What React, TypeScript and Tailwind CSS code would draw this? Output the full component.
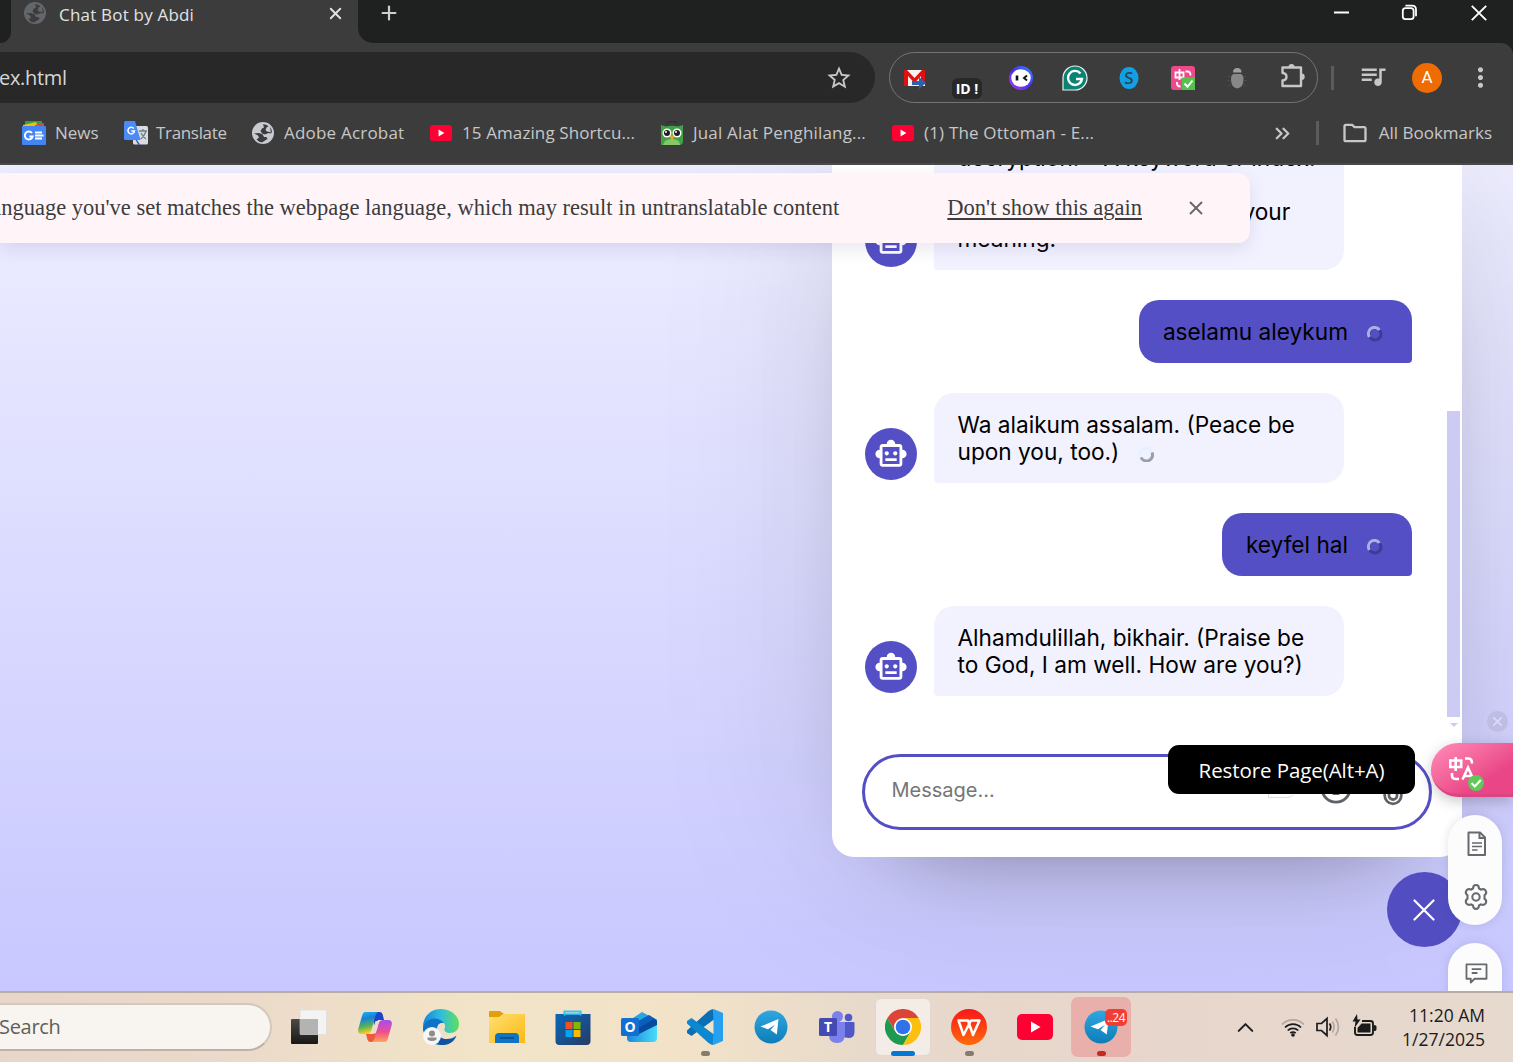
import React from "react";
import { MdStarBorder, MdQueueMusic, MdMoreVert, MdOutlineFolder, MdOutlineSmartToy } from "react-icons/md";
import { ChevronsRight, ChevronUp, Plus, Smile, X } from "lucide-react";

function YouTube({ className }: { className: string }) {
  return (
    <svg viewBox="0 0 36 26" className={className}>
      <rect width="36" height="26" rx="5" fill="#ff0033" />
      <path d="M14 7.5v11l9.5-5.5z" fill="#fff" />
    </svg>
  );
}

function Globe({ className }: { className: string }) {
  return (
    <svg viewBox="0 0 22 22" className={className}>
      <circle cx="11" cy="11" r="11" fill="currentColor" />
      <path d="M11 2.200q3.500 0 5.500 2l-2 1.300-1 2.500 1.500 1.500q3 0 4.800 1.500.3-1.500-.3-3.500l-1.500-2.500 1 6.500-2.500-.5-3.500 1.500-3-1-1.500-2.500 1.500-2.500 2-1z" fill="#3c3c3c" />
      <path d="M2 11.500l5-.5 3.500 1.200 1.500 2.800h2.500l1 2-2.500 1.500-2.500 1.700q-4 0-6-2.700l2.500-2-1-2z" fill="#3c3c3c" />
    </svg>
  );
}

/* ---------- Browser chrome ---------- */

function TabStrip() {
  return (
    <div className="flex h-[43px] bg-[#3c3c3c]">
      <div className="w-[11px] rounded-br-[13px] bg-[#1f2120]" />
      <div className="flex h-7 w-[347px] items-center pl-[13px]">
        <Globe className="-mt-[2px] size-[22px] text-[#63676b]" />
        <span className="ml-[13px] w-[267px] pt-px text-[17px] tracking-[0.2px] whitespace-nowrap text-[#e3e3e3]">Chat Bot by Abdi</span>
        <X className="-mt-[2px] size-[19px] text-[#e3e3e3]" strokeWidth={2.4} />
      </div>
      <div className="flex flex-1 items-start rounded-bl-[15px] bg-[#1f2120]">
        <Plus className="mt-[2px] ml-[20px] size-[22px] text-[#cfcfcf]" strokeWidth={2.4} />
        <div className="ml-auto flex items-center">
          <svg viewBox="0 0 16 26" className="mr-[51px] h-[26px] w-4">
            <path d="M0 12.500h15" stroke="#fff" strokeWidth="2" />
          </svg>
          <svg viewBox="0 0 17 17" className="mr-[53px] -mt-px size-[17px]" fill="none" stroke="#fff" strokeWidth="1.8">
            <rect x="1.8" y="4.2" width="10.8" height="11" rx="2.6" />
            <path d="M4.4 1.6H11q4 0 4 4v6.6" />
          </svg>
          <svg viewBox="0 0 16 16" className="mr-[26px] -mt-px size-4" stroke="#fff" strokeWidth="1.9">
            <path d="M.8.8l14.4 14.4M15.2.8L.8 15.2" />
          </svg>
        </div>
      </div>
    </div>
  );
}

function Extensions() {
  return (
    <div className="ml-[14px] flex h-[51px] w-[429px] items-center rounded-full border-[1.5px] border-[#757575]">
      <div className="flex w-[50px] shrink-0 justify-center">
        <svg viewBox="0 0 24 22" className="h-[22px] w-6">
          <rect x="1" y="3" width="21" height="16" fill="#f4f1ef" />
          <path d="M1 19V3l3 0 7.5 8L19 3h3v12h-4V9l-6.500 7L5 9v10z" fill="#dd1111" />
          <path d="M9 14h7v-4l7 6-7 6v-4H9z" fill="#2f5fb0" />
        </svg>
      </div>
      <div className="flex w-[54px] shrink-0 justify-center">
        <div className="mt-[22px] flex h-[21px] w-[30px] items-center justify-center rounded-[6px] bg-[#282828] text-[14px] font-bold whitespace-nowrap text-white">ID !</div>
      </div>
      <div className="flex w-[54px] shrink-0 justify-center">
        <svg viewBox="0 0 24 24" className="size-6">
          <defs>
            <linearGradient id="face" x1="0" y1="1" x2="1" y2="0">
              <stop offset="0" stopColor="#b43cf0" />
              <stop offset=".5" stopColor="#4a2df5" />
              <stop offset="1" stopColor="#2f8dff" />
            </linearGradient>
          </defs>
          <circle cx="12" cy="12" r="12" fill="url(#face)" />
          <ellipse cx="12" cy="12" rx="9.800" ry="8.800" fill="#fff" />
          <path d="M8 9.500v5" stroke="#111" strokeWidth="2.6" />
          <path d="M18 9.500l-3 2.500 3 2.500" stroke="#111" strokeWidth="1.9" fill="none" />
        </svg>
      </div>
      <div className="flex w-[54px] shrink-0 justify-center">
        <svg viewBox="0 0 26 26" className="size-[26px]">
          <path d="M1 25V13A12 12 0 1 1 13 25z" fill="#0b8372" stroke="#e8f3f1" strokeWidth="1.2" />
          <path d="M18.500 8.500A7 7 0 1 0 20 14h-6" stroke="#fff" strokeWidth="2.300" fill="none" />
        </svg>
      </div>
      <div className="flex w-[54px] shrink-0 justify-center">
        <svg viewBox="0 0 20 22" className="h-[22px] w-5">
          <ellipse cx="10" cy="11" rx="9.500" ry="11" fill="#12a0e4" />
          <text x="10" y="17" textAnchor="middle" fontSize="17" fontWeight="600" fill="#31414b">S</text>
        </svg>
      </div>
      <div className="flex w-[54px] shrink-0 justify-center">
        <svg viewBox="0 0 24 24" className="size-6">
          <rect width="24" height="24" rx="3" fill="#ee4a8b" />
          <path d="M4.500 6.500h8v5h-8zM8.500 3v11M14.500 5.500h2q3 0 3 4M6 16v1.500q0 3 3.500 3" stroke="#fff" strokeWidth="1.800" fill="none" />
          <rect x="11" y="11.500" width="13" height="12.500" fill="#54c14a" />
          <path d="M13.500 17.500l3 3.200 5-6" stroke="#fff" strokeWidth="1.900" fill="none" />
        </svg>
      </div>
      <div className="flex w-[54px] shrink-0 justify-center">
        <svg viewBox="0 0 20 22" className="h-[22px] w-5">
          <path d="M6 5.500q0-4.500 4.250-4.500t4.250 4.500z" fill="#a0a0a0" />
          <path d="M6.500 7h7.500q2.500 1 2.500 5 0 8.500-6.250 9.500Q4 20.500 4 12q0-4 2.500-5z" fill="#888" />
          <path d="M3.500 9.500H1M3.500 13.500H0M4 17.500l-3 1.500M17 9.500h2M17 13.500h3M16.500 17.500l3 1.500" stroke="#4c4c4c" />
        </svg>
      </div>
      <div className="flex w-[54px] shrink-0 justify-center">
        <svg viewBox="0 0 26 26" className="ml-[4px] -mt-[3px] size-[26px]">
          <path d="M2.500 4.500H21v18.500H2.500v-5.500q4-.5 4-3.750t-4-3.750z" fill="none" stroke="#c7c7c7" strokeWidth="2.400" strokeLinejoin="round" />
          <path d="M8.500 4a3 3 0 0 1 6 0zM21.500 10.500a3.200 3.200 0 0 1 0 6.400z" fill="#c7c7c7" />
        </svg>
      </div>
    </div>
  );
}

function Toolbar() {
  return (
    <div className="bg-[#1f2120]">
      <div className="flex h-[69px] items-center rounded-tr-[12px] bg-[#3c3c3c]">
        <div className="flex h-[51px] w-[875px] items-center justify-between rounded-r-full bg-[#282828] pr-[22px]">
          <span className="-ml-px text-[20px] tracking-[-0.300px] text-[#d6d6d6]">ex.html</span>
          <MdStarBorder className="size-7 text-[#c7c7c7]" />
        </div>
        <Extensions />
        <div className="ml-[13px] h-6 w-[3px] bg-[#5c5c5c]" />
        <MdQueueMusic className="-mt-[3px] ml-[24px] size-[30px] text-[#c7c7c7]" />
        <div className="ml-[24px] flex size-[30px] items-center justify-center rounded-full bg-[#ee6c02] font-[Roboto] text-[17px] text-white">A</div>
        <MdMoreVert className="ml-[23px] size-[31px] text-[#c7c7c7]" />
      </div>
    </div>
  );
}

function Bookmark({ icon, label, className }: { icon: React.ReactNode; label: string; className: string }) {
  return (
    <div className={"flex shrink-0 items-center " + className}>
      {icon}
      <span className="whitespace-nowrap">{label}</span>
    </div>
  );
}

function NewsIcon() {
  return (
    <svg viewBox="0 0 24 24" className="size-6">
      <path d="M3 0h17v8H3z" fill="#23a455" />
      <path d="M1 4l13-3 3 7H1z" fill="#fbbc04" />
      <path d="M13 4l9-2v6h-9z" fill="#ea4335" />
      <rect y="5" width="24" height="19" rx="1" fill="#4285f4" />
      <path d="M10 12a4 4 0 1 0 .7 3.500H7.300" stroke="#fff" strokeWidth="1.900" fill="none" />
      <path d="M13 11.500h7M13 14.500h8.500M13 17.500h7" stroke="#fff" strokeWidth="1.800" />
    </svg>
  );
}

function GoogleTranslateIcon() {
  return (
    <svg viewBox="0 0 24 24" className="size-6">
      <rect x="9" y="5" width="15" height="18.500" rx="1.500" fill="#dadce0" />
      <path d="M15 10h8M19 8v2M22 10q-2 6-5.500 8M17 12q2 4 5 6" stroke="#6b7f8c" strokeWidth="1.300" fill="none" />
      <path d="M13 19l3 4.500-1.500.5-3-5z" fill="#3157c0" />
      <path d="M1.500 0H11l5.500 19h-15Q0 19 0 17.500v-16Q0 0 1.500 0z" fill="#4c8bf5" />
      <path d="M9.800 7.500a3.300 3.300 0 1 0 .7 2.500H7.300" stroke="#fff" strokeWidth="1.500" fill="none" />
    </svg>
  );
}

function OwlIcon() {
  return (
    <svg viewBox="0 0 22 24" className="h-6 w-[22px]">
      <path d="M6 2q5-3 10 0" stroke="#2b2b2b" strokeWidth="1.200" fill="none" />
      <path d="M0 4l5 1.500q6-1.500 12 0L22 4v16q0 4-4 4H0z" fill="#43a047" />
      <path d="M2 24q1-6 9-6t8 6z" fill="#82c96a" />
      <circle cx="6" cy="12" r="4.500" fill="#fff" />
      <circle cx="16" cy="12" r="4.500" fill="#fff" />
      <circle cx="6" cy="12" r="3" fill="#1d1d1d" />
      <circle cx="16" cy="12" r="3" fill="#1d1d1d" />
      <circle cx="5" cy="11" r="1" fill="#fff" />
      <circle cx="15" cy="11" r="1" fill="#fff" />
      <path d="M8.500 15.500L11 14l2.500 1.500L11 19.500z" fill="#f5a623" />
    </svg>
  );
}

function BookmarksBar() {
  return (
    <div className="flex h-[53px] items-center border-b-2 border-[#4a4848] bg-[#3c3c3c] pb-[9px] pl-[22px] text-[17px] text-[#c7c7c7]">
      <Bookmark className="w-[102px] gap-[9px]" icon={<NewsIcon />} label="News" />
      <Bookmark className="w-[128px] gap-[8px] tracking-[-0.330px]" icon={<GoogleTranslateIcon />} label="Translate" />
      <Bookmark className="w-[177px] gap-[10px] tracking-[0.200px]" icon={<Globe className="size-[22px] text-[#c7cacf]" />} label="Adobe Acrobat" />
      <Bookmark className="w-[232px] gap-[9px] tracking-[0.100px]" icon={<YouTube className="h-4 w-6" />} label="15 Amazing Shortcu..." />
      <Bookmark className="w-[230px] gap-[10px] tracking-[0.170px]" icon={<OwlIcon />} label="Jual Alat Penghilang..." />
      <Bookmark className="gap-[9px] tracking-[0.180px]" icon={<YouTube className="h-4 w-6" />} label="(1) The Ottoman - E..." />
      <ChevronsRight className="ml-auto size-[23px]" strokeWidth={2.400} />
      <div className="ml-[22px] h-6 w-[3px] bg-[#5c5c5c]" />
      <Bookmark className="mr-[21px] ml-[22px] gap-[10px]" icon={<MdOutlineFolder className="size-[28px]" />} label="All Bookmarks" />
    </div>
  );
}

/* ---------- Chat page ---------- */

function Spinner({ dark }: { dark?: boolean }) {
  return dark ? (
    <svg viewBox="0 0 16 16" className="mr-[5px] ml-[19px] inline size-4 align-[-2px]" fill="none" strokeWidth="3">
      <circle cx="8" cy="8" r="6" stroke="#3e3a96" />
      <path d="M2.500 11A6 6 0 0 1 12.500 4" stroke="#a9b0e6" />
    </svg>
  ) : (
    <svg viewBox="0 0 16 16" className="ml-[12px] inline size-4 align-[-2px]" fill="none" strokeWidth="3">
      <circle cx="8" cy="8" r="6" stroke="#e6f1fe" />
      <path d="M14 6.500A6 6 0 0 1 3 11.500" stroke="#9d9da8" />
    </svg>
  );
}

function BotMessage({ children }: { children: React.ReactNode }) {
  return (
    <div className="flex shrink-0 items-end">
      <div className="mb-[3px] flex size-[52px] shrink-0 items-center justify-center rounded-full bg-[#544fc4]">
        <MdOutlineSmartToy className="size-[34px] text-white" />
      </div>
      <div className="ml-[17px] w-[410px] rounded-[20px] rounded-bl-[4px] bg-[#f2f2ff] py-[18px] pr-6 pl-[23.500px] whitespace-nowrap">{children}</div>
    </div>
  );
}

function UserMessage({ children }: { children: React.ReactNode }) {
  return (
    <div className="shrink-0 self-end rounded-[20px] rounded-br-[4px] bg-[#544fc4] py-[18px] pr-6 pl-6 whitespace-nowrap">
      {children}
      <Spinner dark />
    </div>
  );
}

function ChatPopup() {
  return (
    <div className="absolute top-0 left-[832px] h-[692px] w-[630px] rounded-b-[22px] bg-white font-[Inter] shadow-[0_0_192px_rgba(0,0,0,0.1),0_48px_96px_-72px_rgba(0,0,0,0.5)]">
      <div className="flex h-[567px]">
        <div className="flex h-[531px] flex-1 flex-col justify-end gap-[30px] overflow-hidden pl-[33px] text-[22.650px] leading-[27px] text-black">
          <BotMessage>
            decryption. * A keyword or index.
            <br />
            <br />
            <span className="block pl-[285px]">your</span>
            meaning.
          </BotMessage>
          <UserMessage>aselamu aleykum</UserMessage>
          <BotMessage>
            Wa alaikum assalam. (Peace be
            <br />
            upon you, too.) <Spinner />
          </BotMessage>
          <UserMessage>keyfel hal</UserMessage>
          <BotMessage>
            Alhamdulillah, bikhair. (Praise be
            <br />
            to God, I am well. How are you?)
          </BotMessage>
        </div>
        <div className="mr-[2px] ml-[35px] flex w-[13px] flex-col items-center">
          <div className="mt-[246px] h-[306px] w-full bg-[#cccbf4]" />
          <div className="mt-[6px] h-0 w-0 border-x-4 border-t-4 border-x-transparent border-t-[#cccbf4]" />
        </div>
      </div>
      <div className="mx-[30px] mt-[22px] flex h-[76px] w-[570px] items-center rounded-full border-[3px] border-[#544fc4] pb-[4px] pl-[26.500px]">
        <span className="flex-1 text-[20px] text-[#757575]">Message...</span>
        <div className="mt-[2px] mr-[24px] h-[14px] w-[27px] rounded-br-[8px] border-b border-l border-[#dcdcea]" />
        <Smile className="mr-[30px] -mt-[4px] size-[34px] shrink-0" color="#5f6368" strokeWidth={2} />
        <svg viewBox="0 0 20 36" className="-mt-[2px] mr-[26px] h-9 w-5 shrink-0" fill="none" stroke="#5f6368" strokeWidth="2.800">
          <path d="M18.300 6v18.500a8.300 8.300 0 0 1-16.600 0V6M14 6v18.500a4 4 0 0 1-8 0V6" />
        </svg>
      </div>
    </div>
  );
}

function LanguageBanner() {
  return (
    <div className="absolute top-2 left-0 flex h-[70px] w-[1250px] items-center justify-end overflow-hidden rounded-r-[12px] bg-[#fff5f9] pr-[43px] font-['Liberation_Serif'] text-[22.500px] whitespace-nowrap text-[#3c3c3c] shadow-[0_6px_18px_rgba(60,60,120,0.12)]">
      <span className="mr-[108px]">language you've set matches the webpage language, which may result in untranslatable content</span>
      <span className="underline decoration-[1.500px] underline-offset-[3px]">Don't show this again</span>
      <X className="ml-[43px] size-[22px] shrink-0 text-[#666]" strokeWidth={2} />
    </div>
  );
}

function TranslateWidget() {
  return (
    <>
      <svg viewBox="0 0 20 20" className="absolute top-[546px] left-[1487px] size-[21px]">
        <circle cx="10" cy="10" r="10" fill="#bfbee2" />
        <path d="M6 6l8 8M14 6l-8 8" stroke="#d9d8f8" strokeWidth="1.800" />
      </svg>
      <div className="absolute top-[578px] left-[1431px] h-[54px] w-[82px] rounded-l-full border-b-[3px] border-[#dc4381] bg-gradient-to-br from-[#ff8cb9] to-[#ea4687] to-70% pt-[13px] pl-[18px] shadow-[0_4px_14px_rgba(0,0,0,0.22)]">
        <svg viewBox="0 0 36 36" className="size-9" fill="none" stroke="#fff" strokeWidth="2.600">
          <path d="M1.200 4.500h11v6.500h-11zM6.700 1v14M16 2.500h3.500q3.500 0 3.500 5M3 17v2.500q0 3.500 4 3.500h3" />
          <path d="M13.500 23.500l5.500-12 5.500 12M15.500 20h7" />
          <circle cx="27" cy="27" r="8" fill="#5fc858" stroke="none" />
          <path d="M22.500 27l3.300 3.500 6-6.500" strokeWidth="2.200" />
        </svg>
      </div>
      <div className="absolute top-[580px] left-[1168px] flex h-[49px] w-[247px] items-center justify-center rounded-[11px] bg-black pt-[2px] text-[20.500px] tracking-[-0.080px] whitespace-nowrap text-white">Restore Page(Alt+A)</div>
      <div className="absolute top-[650px] left-[1448px] flex h-[110px] w-[54px] flex-col items-center rounded-full bg-[#fcfcfc] pt-4 shadow-[0_0_10px_rgba(60,60,120,0.15)]">
        <svg viewBox="0 0 20 26" className="ml-[3px] h-[26px] w-5" fill="none" stroke="#66696d" strokeWidth="2">
          <path d="M1.500 1.500h11.500l5 5v17.500H1.500z" strokeLinejoin="round" />
          <path d="M12.500 1.500V7H18" />
          <path d="M5 12h10M5 15.500h10M5 19h5.500" strokeWidth="1.600" />
        </svg>
        <svg viewBox="0 0 24 24" className="mt-[27px] ml-px size-[26px]" fill="none" stroke="#66696d" strokeWidth="1.900" strokeLinejoin="round">
          <path d="M9.300 4.200Q9.300 1 12 1t2.700 3.200q1 .4 1.800 1Q19.600 3.900 21 6.200q1.300 2.400-1.200 4.300.2 1.500 0 3 2.500 1.900 1.200 4.300-1.400 2.300-4.500 1-.8.600-1.800 1Q14.700 23 12 23t-2.700-3.200q-1-.4-1.800-1-3.100 1.300-4.500-1-1.300-2.400 1.200-4.300-.2-1.500 0-3Q1.700 8.600 3 6.200q1.400-2.300 4.500-1 .8-.6 1.800-1z" />
          <circle cx="12" cy="12" r="3.400" />
        </svg>
      </div>
      <div className="absolute top-[778px] left-[1448px] flex h-[80px] w-[54px] justify-center rounded-full bg-[#fcfcfc] pt-5 shadow-[0_0_10px_rgba(60,60,120,0.15)]">
        <svg viewBox="0 0 24 22" className="ml-[3px] h-[21px] w-[23px]" fill="none" stroke="#66696d" strokeWidth="1.900">
          <path d="M1.500 1.500h21v15H10L6 20.500v-4H1.500z" strokeLinejoin="round" />
          <path d="M7 6.500h10M7 10.500h6" />
        </svg>
      </div>
    </>
  );
}

function ChatPage() {
  return (
    <div className="relative h-[826px] overflow-hidden bg-gradient-to-b from-[#eeeeff] to-[#c8c7ff]">
      <ChatPopup />
      <div className="absolute top-[707px] left-[1387px] flex size-[75px] items-center justify-center rounded-full bg-[#524dc0] pr-[2px]">
        <svg viewBox="0 0 22 22" className="size-[22px]" stroke="#fff" strokeWidth="2.200" strokeLinecap="round">
          <path d="M1.500 1.500l19 19M20.500 1.500l-19 19" />
        </svg>
      </div>
      <LanguageBanner />
      <TranslateWidget />
    </div>
  );
}

/* ---------- Taskbar ---------- */

function Gradients() {
  return (
    <svg className="absolute size-0">
      <defs>
        <linearGradient id="tvDark" x2="0" y2="1"><stop stopColor="#4a4a46" /><stop offset="1" stopColor="#181818" /></linearGradient>
        <linearGradient id="cpA" x2=".2" y2="1"><stop stopColor="#23b6f3" /><stop offset=".35" stopColor="#1681d8" /><stop offset=".7" stopColor="#58b25a" /><stop offset="1" stopColor="#f7cd1f" /></linearGradient>
        <linearGradient id="cpB" x2="0" y2="1"><stop stopColor="#a64df2" /><stop offset=".55" stopColor="#ee4f8e" /><stop offset="1" stopColor="#ffa557" /></linearGradient>
        <linearGradient id="edA" x1="0" x2="1"><stop stopColor="#1585d8" /><stop offset=".5" stopColor="#31bedd" /><stop offset="1" stopColor="#5ee05a" /></linearGradient>
        <linearGradient id="fold" x2="1" y2="1"><stop stopColor="#ffdf72" /><stop offset="1" stopColor="#fbb913" /></linearGradient>
        <linearGradient id="store" x2="1" y2="1"><stop stopColor="#0669ba" /><stop offset="1" stopColor="#293a66" /></linearGradient>
        <linearGradient id="tg" x2="0" y2="1"><stop stopColor="#2fa7e0" /><stop offset="1" stopColor="#0d7db8" /></linearGradient>
        <linearGradient id="wps" x2="0" y2="1"><stop stopColor="#f8171b" /><stop offset="1" stopColor="#ff6a08" /></linearGradient>
        <linearGradient id="olk" x2="1"><stop stopColor="#1b86dc" /><stop offset="1" stopColor="#48dcfa" /></linearGradient>
      </defs>
    </svg>
  );
}

function TelegramIcon() {
  return (
    <svg viewBox="0 0 36 36" className="size-9">
      <circle cx="18" cy="18" r="16.500" fill="url(#tg)" />
      <path d="M7.500 17.500L25.500 10l-1.700 15.500-6.300-4.500 1.200-1.300 3.300-4-7 4.500z" fill="#fff" />
    </svg>
  );
}

const appIcons: React.ReactNode[] = [
  <svg viewBox="0 0 36 36" className="size-9">
    <rect x="0" y="10" width="27" height="25" rx="1" fill="url(#tvDark)" />
    <rect x="9" y="1" width="26.500" height="24.500" rx="1" fill="#f3f3f3" stroke="#dcdcdc" strokeWidth=".6" />
    <path d="M9 10h18v15.500H9z" fill="#b3b3b1" />
  </svg>,
  <svg viewBox="0 0 36 36" className="size-9">
    <path d="M16 3h7q2 0 2.700 2.500L27 11h-6l-4 6z" fill="#1b44c6" />
    <path d="M20 33h-6q-3 0-3.600-2.500L9 25h7l6-6z" fill="#ee5a3a" />
    <path d="M8 3h13q-2 1-3 5l-3.500 13q-1.200 4-4.500 4H5q-5 0-3.600-5.500L5 7q1-4 3-4z" fill="url(#cpA)" />
    <path d="M28 33H15q2-1 3-5l3.500-13q1.200-4 4.500-4h5q5 0 3.600 5.500L31 29q-1 4-3 4z" fill="url(#cpB)" />
    <path d="M18.500 12h3.500l-3.300 12.500h-4z" fill="#f0dccb" />
  </svg>,
  <svg viewBox="0 0 36 36" className="size-9">
    <path d="M0 18C0 7 8 0 18 0s18 7 18 15c0 6-4 9-9 9-4 0-6-2-6-3.500 0-1.200 1-1.500 1-3.500 0-2.500-2-4.500-6-4.500Q7 12 4 22L0 22z" fill="url(#edA)" />
    <path d="M0 20C1 11 9 8 15 10q4 1.500 6 4-7-1-7 6 0 6 5.500 9.500 4 2.500 8.500 2Q22 36 16 36 2 34 0 20z" fill="#0c73c8" />
    <path d="M14 22q1 7 8 8 7 .5 11.500-3.500-2 6-8 8.500-5 1.500-9 1-4-6-2.500-14z" fill="#1153a0" />
    <path d="M17 14.500a3.800 3.800 0 0 1 5 3.500q-.5 2-.8 3 1 4 6 5.300-6 1.500-10.200-2-2.500-3-2-7z" fill="#eedfc8" />
    <circle cx="9" cy="27" r="9" fill="#f7f7f7" />
    <circle cx="9" cy="24.500" r="3" fill="#8c8c8c" />
    <path d="M4.500 28.500h9v2q-4.500 3-9 0z" fill="#8c8c8c" />
  </svg>,
  <svg viewBox="0 0 36 36" className="size-9">
    <path d="M0 3q0-1 1-1h10l4 3v5H0z" fill="#dfa009" />
    <path d="M0 8h10l4-3h21q1 0 1 1v28H0z" fill="url(#fold)" />
    <path d="M6 34v-6q0-4 4-4h16q4 0 4 4v6z" fill="#0f74c4" />
    <path d="M11 29h14" stroke="#0a4c8a" strokeWidth="1.600" />
  </svg>,
  <svg viewBox="0 0 36 36" className="size-9">
    <path d="M9.500 7V2.500h16V7" stroke="#36c6f6" strokeWidth="2.200" fill="none" />
    <path d="M.500 5h35v27q0 4-4 4h-27q-4 0-4-4z" fill="url(#store)" />
    <path d="M9.500 6.500v-1.500h16v1.500" stroke="#36c6f6" strokeWidth="1.500" fill="none" />
    <path d="M10.500 13h7v7h-7z" fill="#f25022" /><path d="M18.500 13h7v7h-7z" fill="#7fba00" />
    <path d="M10.500 21h7v7h-7z" fill="#00a4ef" /><path d="M18.500 21h7v7h-7z" fill="#ffb900" />
  </svg>,
  <svg viewBox="0 0 36 36" className="size-9">
    <path d="M6 13l15-10 15 8v16H6z" fill="#28a6e3" />
    <path d="M12 15l16-9 8 5-18 13z" fill="#0a5fbc" />
    <path d="M36 12v17q0 4-4 4H10q-4 0-4-4v-3z" fill="url(#olk)" />
    <path d="M16 20l17-10 3 2v4l-18 9z" fill="#064a9f" />
    <rect y="9" width="18" height="18" rx="1.500" fill="#1270d2" />
    <text x="9" y="23" textAnchor="middle" fontSize="14" fontWeight="700" fill="#fff">O</text>
  </svg>,
  <svg viewBox="0 0 36 36" className="size-9">
    <path d="M26.500 0L27 10.500 4.500 27 0 24v-2.500L21 2.500q3-2.500 5.500-2.500z" fill="#0b6fb5" />
    <path d="M26.500 36L27 25.500 4.500 9 0 12v2.500L21 33.500q3 2.500 5.500 2.500z" fill="#0c87d0" />
    <path d="M26.500 0L36 4v28l-9.500 4z" fill="#27a0f0" />
  </svg>,
  <TelegramIcon />,
  <svg viewBox="0 0 36 36" className="size-9">
    <circle cx="18.500" cy="7.500" r="5.500" fill="#7b80ea" />
    <circle cx="29.500" cy="8.500" r="3.800" fill="#5057c6" />
    <path d="M24 13h10.500q1 0 1 1v9q0 6-6 6-4 0-5.500-2z" fill="#5057c6" />
    <path d="M10 13h15q1 0 1 1v11q0 9-8 9t-8-8z" fill="#7b80ea" />
    <rect y="9" width="18" height="18" rx="1.500" fill="#4549b4" />
    <text x="9" y="23" textAnchor="middle" fontSize="14" fontWeight="700" fill="#fff">T</text>
  </svg>,
  <svg viewBox="0 0 36 36" className="size-9">
    <path d="M2.400 9A18 18 0 0 1 33.600 9H18v9l-7.800 4.500z" fill="#dc4437" />
    <path d="M2.400 9l7.800 13.500L18 18l7.800 4.500L18 36A18 18 0 0 1 2.400 9z" fill="#1e9a50" />
    <path d="M33.600 9A18 18 0 0 1 18 36l7.800-13.500L18 18V9z" fill="#fdbf0d" />
    <circle cx="18" cy="18" r="9" fill="#fff" /><circle cx="18" cy="18" r="7.300" fill="#2f72ea" />
  </svg>,
  <svg viewBox="0 0 36 36" className="size-9">
    <circle cx="18" cy="18" r="18" fill="url(#wps)" />
    <path d="M7.500 11.500H17L22 26l6.500-14.500H20L12.500 26z" fill="none" stroke="#fff" strokeWidth="2.500" strokeLinejoin="round" />
  </svg>,
  <YouTube className="h-[26px] w-9" />,
  <TelegramIcon />,
];

const VSCODE = 6, CHROME = 9, WPS = 10, ALERT = 12;

function TaskbarApp({ index, icon }: { index: number; icon: React.ReactNode }) {
  return (
    <div className="relative flex h-[60px] w-[66px] items-center justify-center">
      {index === CHROME && <div className="absolute inset-x-[5px] inset-y-px rounded-[6px] border border-[#e3d8d0] bg-[#f4ece6]" />}
      {index === ALERT && <div className="absolute inset-x-[3px] inset-y-0 rounded-[7px] bg-[#e8afab]" />}
      <div className="relative">{icon}</div>
      {index === CHROME && <div className="absolute bottom-px h-[5px] w-6 rounded-full bg-[#0078d4]" />}
      {(index === VSCODE || index === WPS) && <div className="absolute bottom-px h-[5px] w-[9px] rounded-full bg-[#857c70]" />}
      {index === ALERT && (
        <>
          <div className="absolute bottom-px h-[5px] w-[9px] rounded-full bg-[#c42b1c]" />
          <div className="absolute top-[12px] left-[37px] flex h-[17px] w-[22px] items-center justify-center rounded-[5px] bg-[#f03e36] text-[12px] tracking-[-0.500px] text-white">..24</div>
        </>
      )}
    </div>
  );
}

function Tray() {
  return (
    <div className="mr-[28px] ml-auto flex items-center text-[#1b1b1b]">
      <ChevronUp className="mr-[22px] size-[27px]" strokeWidth={1.800} />
      <svg viewBox="0 0 24 22" className="mr-[11px] h-[22px] w-6" fill="none" stroke="#1b1b1b" strokeWidth="1.700">
        <path d="M1 8.500a15.500 15.500 0 0 1 22 0" stroke="#b3a69e" />
        <path d="M4 11.500a11.300 11.300 0 0 1 16 0M6.700 14.500a7.500 7.500 0 0 1 10.600 0M9.300 17.200a3.800 3.800 0 0 1 5.400 0" />
        <circle cx="12" cy="19" r="1.800" fill="#1b1b1b" stroke="none" />
      </svg>
      <svg viewBox="0 0 24 24" className="mr-[12px] size-6" fill="none" stroke="#1b1b1b" strokeWidth="1.700">
        <path d="M1 8.500h4.500L11 3.500v17l-5.500-5H1zM13.500 8.500q2.500 3.500 0 7" />
        <path d="M16.300 6.500q3.500 5.500 0 11M19.500 3.500q6 8.500 0 17" stroke="#b3a69e" />
      </svg>
      <svg viewBox="0 0 26 24" className="mr-[24px] -mt-[3px] h-6 w-[26px]" fill="#1b1b1b">
        <path d="M3 13v5.500q0 2.500 2.500 2.500h13q2.500 0 2.500-2.500v-9Q21 7 18.500 7H10" fill="none" stroke="#1b1b1b" strokeWidth="1.900" />
        <path d="M9.500 9.500h9v9h-13V14zM22 11q2.500 0 2.500 1.500v3q0 1.500-2.500 1.500zM5 0L.500 7.500h3L2.500 14 8.500 5.500h-3z" />
      </svg>
      <div className="text-right text-[17.500px] leading-6 whitespace-nowrap">
        <div>11:20 AM</div>
        <div>1/27/2025</div>
      </div>
    </div>
  );
}

function Taskbar() {
  return (
    <div className="flex h-[71px] items-center border-t-2 border-[#b8ada6] bg-[linear-gradient(90deg,#e8d7c9_0,#ebdaca_16%,#f2e4c7_32%,#f1e2c9_46%,#e7d9cb_58%,#e8d6cc_75%,#e6d9cd_100%)] pb-px">
      <Gradients />
      <div className="-ml-6 flex h-[48px] w-[296px] items-center rounded-full border-2 border-[#d6c7bb] border-b-[#beb1a6] bg-[#f8f4ef] pl-[21px] text-[20px] tracking-[-0.300px] text-[#615e5b]">Search</div>
      <div className="ml-[4px] flex">
        {appIcons.map((icon, i) => (
          <TaskbarApp key={i} index={i} icon={icon} />
        ))}
      </div>
      <Tray />
    </div>
  );
}

export default function App() {
  return (
    <div className="flex h-[1062px] w-[1513px] flex-col overflow-hidden font-['Open_Sans',sans-serif]">
      <TabStrip />
      <Toolbar />
      <BookmarksBar />
      <ChatPage />
      <Taskbar />
    </div>
  );
}
